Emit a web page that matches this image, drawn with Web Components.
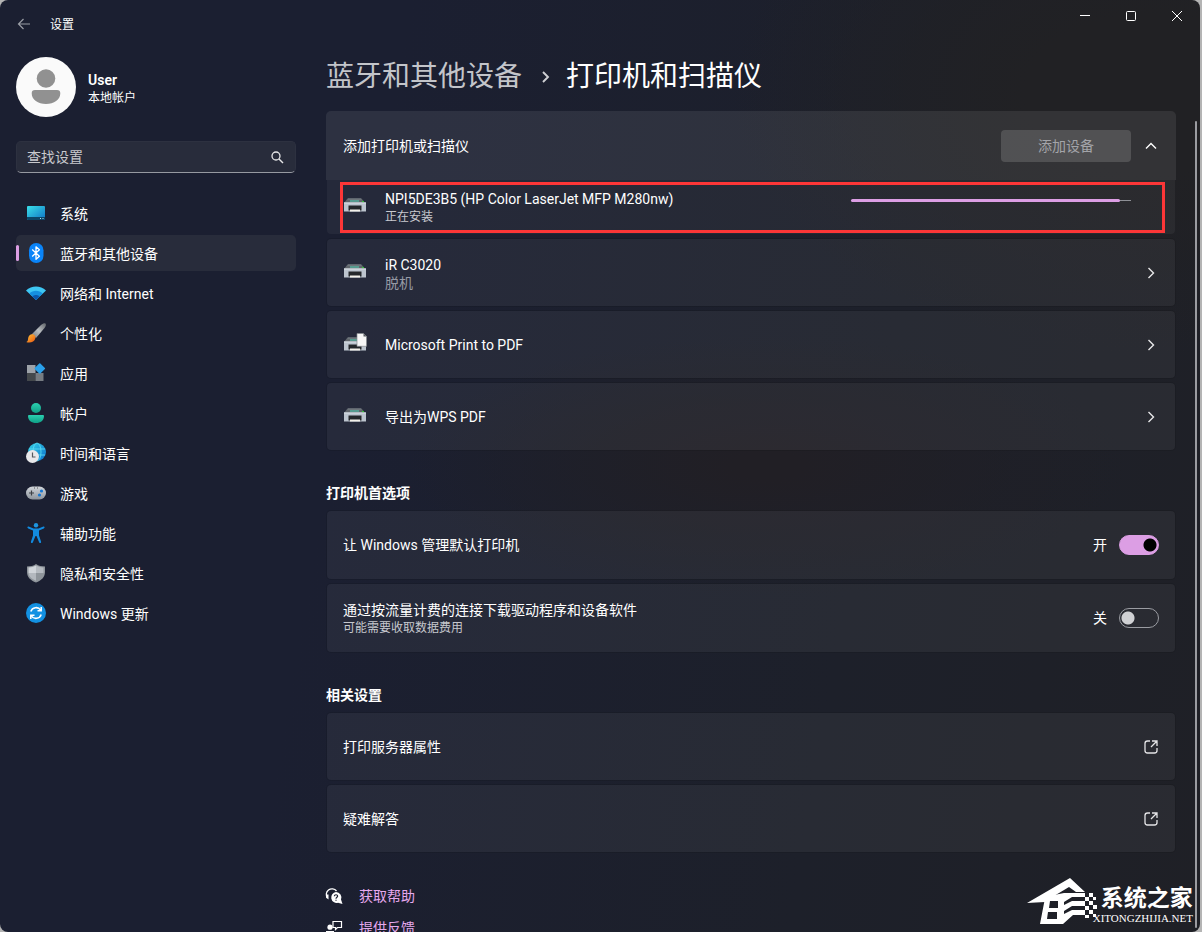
<!DOCTYPE html>
<html lang="zh-CN">
<head>
<meta charset="utf-8">
<title>设置</title>
<style>
  html, body { height: 100%; margin: 0; }
  body {
    background: #b4b4b4;
    color: #fff;
    font: 14px/20px Roboto, "Noto Sans CJK SC", sans-serif;
    overflow: hidden;
  }
</style>
</head>
<body>
<settings-window>
  <title-bar slot="title">设置</title-bar>

  <user-profile slot="side" name="User">本地帐户</user-profile>
  <search-box slot="side" placeholder="查找设置"></search-box>
  <nav-list slot="side">
    <nav-item icon="system">系统</nav-item>
    <nav-item icon="bluetooth" selected>蓝牙和其他设备</nav-item>
    <nav-item icon="wifi">网络和 Internet</nav-item>
    <nav-item icon="brush">个性化</nav-item>
    <nav-item icon="apps">应用</nav-item>
    <nav-item icon="account">帐户</nav-item>
    <nav-item icon="time">时间和语言</nav-item>
    <nav-item icon="game">游戏</nav-item>
    <nav-item icon="access">辅助功能</nav-item>
    <nav-item icon="shield">隐私和安全性</nav-item>
    <nav-item icon="update">Windows 更新</nav-item>
  </nav-list>

  <page-title parent="蓝牙和其他设备">打印机和扫描仪</page-title>
  <card-group>
    <add-device action="添加设备">
      添加打印机或扫描仪
      <install-row slot="detail" name="NPI5DE3B5 (HP Color LaserJet MFP M280nw)" value="96">正在安装</install-row>
    </add-device>
    <setting-card icon="printer" end="chevron" note="脱机" dim>iR C3020</setting-card>
    <setting-card icon="printerdoc" end="chevron">Microsoft Print to PDF</setting-card>
    <setting-card icon="printer" end="chevron">导出为WPS PDF</setting-card>
  </card-group>
  <card-group heading="打印机首选项">
    <setting-card tall>让 Windows 管理默认打印机<toggle-switch slot="end" on label="让 Windows 管理默认打印机"></toggle-switch></setting-card>
    <setting-card tall note="可能需要收取数据费用">通过按流量计费的连接下载驱动程序和设备软件<toggle-switch slot="end" label="通过按流量计费的连接下载驱动程序和设备软件"></toggle-switch></setting-card>
  </card-group>
  <card-group heading="相关设置">
    <setting-card end="external">打印服务器属性</setting-card>
    <setting-card end="external">疑难解答</setting-card>
  </card-group>
  <help-links>
    <help-link icon="help">获取帮助</help-link>
    <help-link icon="feedback">提供反馈</help-link>
  </help-links>

  <site-mark slot="mark" site="XITONGZHIJIA.NET">系统之家</site-mark>
</settings-window>

<script>
const PRINTER = `
  <path d="M4.500 3.500h14l3.500 4.500H1z" fill="#5f656b"/><path d="M5 3.500h13l.5 1H4.500z" fill="#7d8389"/>
  <path d="M7 5.500h9v1H7z" fill="#4fd3b5"/><path d="M1 7.500h22v9H1z" fill="#bcc4ce"/>
  <path d="M1 7.500h22v1H1z" fill="#dbe0e6"/><circle cx="20" cy="6.500" r=".8" fill="#2fe02f"/>
  <path d="M5.500 10.500h13v5h-13z" fill="#24272a"/><path d="M7 14.500h10v2H7z" fill="#f3f1ea"/>`;
const ICONS = {
  back: [16, `<path d="M14 8H2.500M7.500 3 2.500 8l5 5" fill="none" stroke="#9a9da5" stroke-width="1.200"/>`],
  min: [12, `<path d="M1 5.500h10" stroke="#fff"/>`],
  max: [12, `<rect x="1.500" y="1.500" width="9" height="9" rx="1" fill="none" stroke="#fff"/>`],
  close: [12, `<path d="M1 1l10 10M11 1 1 11" stroke="#fff" fill="none"/>`],
  search: [16, `<circle cx="7" cy="7" r="4" fill="none" stroke="#e6e6e8" stroke-width="1.300"/><path d="M10 10l4 4" stroke="#e6e6e8" stroke-width="1.500"/>`],
  user: [60, `<circle cx="30" cy="30" r="30" fill="#fafafa"/><circle cx="30" cy="21.500" r="9.300" fill="#919191"/><path d="M19 33h22a3.300 3.300 0 0 1 3.300 3.300C44.300 43 38 47 30 47s-14.300-4-14.300-10.700A3.300 3.300 0 0 1 19 33z" fill="#919191"/>`],
  system: [20, `<defs><linearGradient id="g" x2="1" y2="1"><stop stop-color="#3ae0ea"/><stop offset="1" stop-color="#0f72c4"/></linearGradient></defs><rect x="1" y="3" width="18" height="14" rx="1" fill="url(#g)"/><path d="M1 14h18v2a1 1 0 0 1-1 1H2a1 1 0 0 1-1-1z" fill="#0c4668"/><path d="M14 15h1v1h-1zM16.500 15h1v1h-1z" fill="#a9dff0"/>`],
  bluetooth: [20, `<rect x="3" y="0" width="14.500" height="20" rx="7.200" fill="#0a84f8"/><path d="M6.200 6.600l7.200 6.600-3.400 3V3.800l3.400 3-7.200 6.600" fill="none" stroke="#fff" stroke-width="1.300" stroke-linejoin="round"/>`],
  wifi: [20, `<path d="M0 7.500C5.500 2 14.500 2 20 7.500L10 17z" fill="#3ec7f4"/><path d="M3.300 10.600c3.700-3.700 9.700-3.700 13.400 0L10 17z" fill="#1590e0"/><path d="M6.300 13.500c2-2 5.400-2 7.400 0L10 17z" fill="#0b58ad"/>`],
  brush: [20, `<defs><linearGradient id="g" x1="1" x2="0" y2="1"><stop stop-color="#5e6267"/><stop offset=".5" stop-color="#b9bdc1"/><stop offset="1" stop-color="#73777c"/></linearGradient><linearGradient id="h" x2="1" y2="1"><stop stop-color="#ffc43a"/><stop offset="1" stop-color="#ea5410"/></linearGradient></defs><path d="M19.500.5c1 1 .2 2.800-1 4.500L10 15l-4.500-3.500L15 2C17 .4 18.700-.2 19.500.5z" fill="url(#g)"/><path d="M5 11.500c2.800-.8 5 1.400 4.300 4C8.400 19 4 20.600.200 19c2.300-.8 1.500-2.600 2.200-4.800.5-1.500 1.300-2.400 2.600-2.700z" fill="url(#h)"/>`],
  apps: [20, `<path d="M1 2h8.500v8H1z" fill="#9da2a9"/><path d="M1 10h8.500v8H1z" fill="#44484c"/><path d="M9.500 10h8v8h-8z" fill="#777c82"/><rect x="9.800" y="1.500" width="8" height="8" rx=".8" transform="rotate(45 13.800 5.500)" fill="#2aa0ea"/>`],
  account: [20, `<defs><linearGradient id="g" x2="0" y2="1"><stop stop-color="#2bd0b0"/><stop offset="1" stop-color="#0f9f86"/></linearGradient></defs><circle cx="10" cy="5" r="5" fill="url(#g)"/><path d="M3 12h14a1 1 0 0 1 1 1c0 4.500-3.500 7-8 7s-8-2.500-8-7a1 1 0 0 1 1-1z" fill="url(#g)"/>`],
  time: [20, `<defs><linearGradient id="g" x2="1" y2="1"><stop stop-color="#35d2e6"/><stop offset="1" stop-color="#0b6fcb"/></linearGradient></defs><circle cx="11" cy="9" r="9" fill="url(#g)"/><g fill="none" stroke="#5fe0f2" stroke-width=".8"><ellipse cx="11" cy="9" rx="4" ry="9"/><path d="M3 6h16M3 12h16"/></g><circle cx="6.500" cy="13.500" r="6.500" fill="#e8e8ea"/><path d="M6.500 9.500V14H9.500" fill="none" stroke="#55595e" stroke-width="1.200"/>`],
  game: [20, `<defs><linearGradient id="g" x2="0" y2="1"><stop stop-color="#d2d6db"/><stop offset="1" stop-color="#8d949c"/></linearGradient></defs><rect x="0" y="3.500" width="20" height="13" rx="6.500" fill="url(#g)"/><path d="M3 10h5M5.500 7.500v5" stroke="#3c4045" stroke-width="1.200"/><circle cx="15.500" cy="8" r="1.600" fill="#1677d2"/><circle cx="13.500" cy="12" r="1.600" fill="#1677d2"/><path d="M8 4.500h1v1H8zM11 4.500h1v1h-1z" fill="#555"/>`],
  access: [20, `<circle cx="10" cy="2.200" r="2.200" fill="#1d95e0"/><path d="M2.600 3.600 7.500 5.400h5l4.900-1.800c1.400-.2 1.700 1.200.4 1.800L13 7.600v4.900l2.100 6.300c.2 1.400-1.400 1.700-2 .4L10.500 13h-1l-2.600 6.200c-.6 1.300-2.200 1-2-.4L7 12.500V7.600L2.200 5.400c-1.300-.6-1-2 .4-1.800z" fill="#128be0"/>`],
  shield: [20, `<path d="M10 1c2.500 1.800 5.500 2.500 9 2.500V9c0 5-3.500 8.500-9 10.500C4.500 17.500 1 14 1 9V3.500C4.500 3.500 7.500 2.800 10 1z" fill="#8f959b"/><path d="M10 2.600c2.300 1.300 4.700 1.900 7.500 2V10H10z" fill="#b5bac0"/><path d="M10 2.600C7.700 3.900 5.300 4.500 2.500 4.600V10H10z" fill="#d0d4d9"/><path d="M2.500 10H10v7.800C5.500 16 2.800 13.500 2.500 10z" fill="#b3b8be"/>`],
  update: [20, `<circle cx="10" cy="10" r="10" fill="#1391e2"/><g fill="none" stroke="#fff" stroke-width="1.500"><path d="M4.800 8.500A5.500 5.500 0 0 1 14.700 7.200M15.200 11.500A5.500 5.500 0 0 1 5.300 12.800"/><path d="M15.200 4v3.700h-3.700M4.800 16v-3.700h3.700"/></g>`],
  printer: [24, PRINTER],
  printerdoc: [24, `<g transform="translate(0 1)">${PRINTER}</g><path d="M14 .5h6.500l3 3v9.800H14z" fill="#f7f7f7" stroke="#85898e" stroke-width=".7"/><path d="M20.500.5v3h3z" fill="#55595e"/>`],
  chevron: [16, `<path d="M5.500 3l5 5-5 5" fill="none" stroke="#e8e8ea" stroke-width="1.400"/>`],
  up: [16, `<path d="M3 10.500l5-5 5 5" fill="none" stroke="#fff" stroke-width="1.400"/>`],
  crumb: [16, `<path d="M7 3l5 5-5 5" fill="none" stroke="#cfd0d4" stroke-width="1.900"/>`],
  external: [16, `<path d="M7 2H4.500A2.500 2.500 0 0 0 2 4.500v7A2.500 2.500 0 0 0 4.500 14h7a2.500 2.500 0 0 0 2.500-2.500V9M9 2h5v5M14 2 8 8" fill="none" stroke="#e4e4e6" stroke-width="1.300"/>`],
  help: [16, `<path d="M1.500 10A5.500 5.500 0 1 1 10.500 3" fill="none" stroke="#fff" stroke-width="1.300"/><path d="M0 6.500h2.500v5L0 9.500z" fill="#fff"/><path d="M10 4a5.500 5.500 0 0 1 5 7.600L16.500 16 12 14.800A5.500 5.500 0 1 1 10 4z" fill="#fff"/><path d="M8.300 8.200c.2-2 3.400-1.900 3.300 0-.1 1.100-1.600 1.100-1.600 2.500M10 11.700v1.100" fill="none" stroke="#1d2030" stroke-width="1.200"/>`],
  feedback: [16, `<path d="M7 1.500h8.500v6h-4l-2 2v-2H7z" fill="none" stroke="#fff" stroke-width="1.200"/><circle cx="4" cy="7.200" r="2.600" fill="#fff"/><path d="M0 11h8v2c0 2-1.800 3-4 3s-4-1-4-3z" fill="#fff"/>`],
};
const icon = name => {
  const [size, art] = ICONS[name];
  return `<svg width="${size}" height="${size}" viewBox="0 0 ${size} ${size}" aria-hidden="true">${art}</svg>`;
};
const BASE = `:host,*{box-sizing:border-box}svg{display:block;flex:none;overflow:visible}button,input{font:inherit;color:inherit}button{border:0;background:none;padding:0;margin:0}a{color:inherit;text-decoration:none}`;

function define(tag, render) {
  customElements.define(tag, class extends HTMLElement {
    constructor() {
      super();
      this.attachShadow({ mode: "open" });
    }
    connectedCallback() {
      const t = document.createElement("template");
      const [css, html] = render(name => this.getAttribute(name), name => this.hasAttribute(name));
      t.innerHTML = `<style>${BASE}${css}</style>${html}`;
      this.shadowRoot.replaceChildren(t.content.cloneNode(true));
    }
  });
}

define("settings-window", () => [`
  :host{display:grid;position:relative;grid-template:48px minmax(0,1fr)/310px minmax(0,1fr);height:100vh;margin-right:2px;border-radius:8px;overflow:hidden;
    background:radial-gradient(ellipse 420px 260px at 96% 10%,#212124 30%,#21212400),radial-gradient(ellipse 360px 130px at 64% 50%,#211f25 10%,#211f2500),linear-gradient(100deg,#1b1f31 30%,#1d202a 70%,#1f2026)}
  ::slotted([slot=title]){grid-column:1/-1}
  aside{padding:9px 14px 0 16px;min-width:0}
  .pane{display:flex;min-width:0;min-height:0}
  main{flex:1;min-width:0;padding:9px 19px 0 16px;overflow:hidden}
  .bar{flex:none;width:2px;margin:73px 3px 4px 0;border-radius:1px;background:#9b9ca1}
  ::slotted([slot=mark]){position:absolute;right:7px;bottom:8px}`,
  `<slot name="title"></slot><aside><slot name="side"></slot></aside><div class="pane"><main><slot></slot></main><div class="bar"></div></div><slot name="mark"></slot>`]);

define("title-bar", () => [`
  :host{display:flex;font-size:12px}
  .back{width:48px;height:48px;display:grid;place-items:center}
  .name{flex:1;padding:1px 0 0 2px;line-height:48px}
  .ctl{width:46px;height:32px;display:grid;place-items:center}`,
  `<button class="back" aria-label="返回">${icon("back")}</button><span class="name"><slot></slot></span>
   <button class="ctl" aria-label="最小化">${icon("min")}</button><button class="ctl" aria-label="最大化">${icon("max")}</button><button class="ctl" aria-label="关闭">${icon("close")}</button>`]);

define("user-profile", a => [`
  :host{display:flex;align-items:center;gap:12px;margin-bottom:24px}
  div{padding-top:2px}
  b{display:block;font-size:14px;line-height:20px;font-weight:600}
  small{display:block;font-size:12px;line-height:16px}`,
  `${icon("user")}<div><b>${a("name")}</b><small><slot></slot></small></div>`]);

define("search-box", a => [`
  :host{display:block;margin-bottom:22px}
  label{display:flex;align-items:center;height:32px;padding:0 10px;border:1px solid #2d3140;border-bottom-color:#9699a1;border-radius:5px;background:#282c3b}
  input{flex:1;min-width:0;border:0;padding:0;background:none;outline:0}
  input::placeholder{color:#c8c9cd;opacity:1}`,
  `<label><input type="text" aria-label="${a("placeholder")}" placeholder="${a("placeholder")}">${icon("search")}</label>`]);

define("nav-list", () => [`:host{display:block}nav{display:grid;gap:4px}`, `<nav><slot></slot></nav>`]);

define("nav-item", (a, has) => [`
  :host{display:block}
  a{display:flex;position:relative;align-items:center;gap:14px;height:36px;padding-left:10px;border-radius:5px}
  span{padding-top:2px}
  a[aria-current]{background:#282c3b}
  a[aria-current]::before{content:"";position:absolute;left:0;top:10px;width:3px;height:16px;border-radius:2px;background:#dc9ee4}`,
  `<a href="#${a("icon")}"${has("selected") ? ' aria-current="page"' : ""}>${icon(a("icon"))}<span><slot></slot></span></a>`]);

define("page-title", a => [`
  :host{display:block;margin-bottom:14px}
  h1{display:flex;align-items:center;gap:14px;margin:0;font-size:28px;line-height:40px;font-weight:400;white-space:nowrap}
  a{color:#c3c5ca}`,
  `<h1><a href="#devices">${a("parent")}</a>${icon("crumb")}<span><slot></slot></span></h1>`]);

define("card-group", (a, has) => [`
  :host{display:block}
  h2{margin:0;padding-top:33px;font-size:14px;line-height:20px;font-weight:700;margin-bottom:8px}
  .cards{display:grid;gap:5px}`,
  `${has("heading") ? `<h2>${a("heading")}</h2>` : ""}<div class="cards"><slot></slot></div>`]);

define("add-device", a => [`
  :host{display:block}
  header{display:flex;align-items:center;gap:12px;height:69px;padding:0 17px;border-radius:5px 5px 0 0;background:#ffffff15}
  .name{flex:1}
  .add{width:130px;height:32px;border-radius:4px;background:#ffffff26;color:#a3a4a9}`,
  `<header><span class="name"><slot></slot></span><button class="add" disabled>${a("action")}</button><button aria-label="收起">${icon("up")}</button></header><slot name="detail"></slot>`]);

define("install-row", a => [`
  :host{display:flex;position:relative;gap:18px;height:54px;margin:0 1px;padding:9px 44px 0 16px;border-radius:0 0 4px 4px;background:#ffffff0c}
  svg{margin-top:6px}
  .text{flex:1;min-width:0}
  b{display:block;font-weight:400;line-height:20px}
  small{display:block;font-size:12px;line-height:16px;color:#c9cad0}
  progress{appearance:none;-webkit-appearance:none;flex:none;width:280px;height:3px;margin-top:10px;border:0;background:none}
  ::-webkit-progress-bar{background:linear-gradient(#8e9096,#8e9096) center/100% 1px no-repeat}
  ::-webkit-progress-value{background:#dc9ee4;border-radius:2px}
  .mark{position:absolute;inset:2px 10px 1px 13px;border:3px solid #fc3637}`,
  `${icon("printer")}<div class="text"><b>${a("name")}</b><small><slot></slot></small></div><progress max="100" value="${a("value")}" aria-label="${a("name")}"></progress><div class="mark"></div>`]);

define("setting-card", (a, has) => [`
  :host{display:flex;align-items:center;gap:18px;height:${has("tall") ? 68 : 67}px;margin:0 1px;padding:0 16px;border-radius:4px;background:#ffffff0d;box-shadow:0 0 0 1px #00000018}
  .text{flex:1;min-width:0}
  .name{display:block}
  small{display:block;font-size:${has("dim") ? 14 : 12}px;line-height:16px;color:${has("dim") ? "#969aa5" : "#c6c8ce"}}`,
  `${has("icon") ? icon(a("icon")) : ""}<div class="text"><span class="name"><slot></slot></span>${has("note") ? `<small>${a("note")}</small>` : ""}</div>${has("end") ? `<button aria-label="打开">${icon(a("end"))}</button>` : '<slot name="end"></slot>'}`]);

define("toggle-switch", (a, has) => [`
  :host{display:block}
  label{display:flex;align-items:center;gap:12px}
  input{appearance:none;width:40px;height:20px;margin:0;border:1px solid #9a9ca2;border-radius:10px;background:radial-gradient(circle at 8px 9px,#d0d1d4 6px,#0000 7px)}
  input:checked{border-color:#dc9ee4;background:radial-gradient(circle at 30px 9px,#000 6px,#dc9ee4 7px)}`,
  `<label><span>${has("on") ? "开" : "关"}</span><input type="checkbox" role="switch" aria-label="${a("label")}"${has("on") ? " checked" : ""}></label>`]);

define("help-links", () => [`:host{display:block;padding-top:28px}`, `<slot></slot>`]);
define("help-link", a => [`
  :host{display:block;color:#e6a9ee}
  a{display:flex;align-items:center;gap:17px;height:32px}`,
  `<a href="#${a("icon")}">${icon(a("icon"))}<span><slot></slot></span></a>`]);

define("site-mark", a => [`
  :host{display:flex;align-items:flex-end;color:#fff}
  .words{display:block;margin-left:-6px}
  b{display:block;padding-left:8px;font-size:23px;line-height:26px;font-weight:700}
  small{display:block;font:11px/12px "Liberation Serif",serif}`,
  `<svg width="72" height="46" viewBox="0 0 72 46" aria-hidden="true"><g fill="#fff">
     <path d="M0 25 43 0 58 14H49L42 9 22 21 18 24z"/>
     <path fill-rule="evenodd" d="M18 20 27 17 37 15 58 15V19H45L37 24V27L45 23H58V28H45L37 33V36L45 32H58V37H46L36 46H13zM23 23 22 30H31V23zM21 34 20 41H30V34z"/>
     <path d="M58 19h4v4h-4zM62 15h4v4h-4zM62 23h4v4h-4zM66 19h3v3h-3zM66 27h4v4h-4zM58 28h4v4h-4zM62 32h4v4h-4zM66 36h3v3h-3zM58 37h4v3h-4z"/></g></svg>
   <span class="words"><b><slot></slot></b><small>${a("site")}</small></span>`]);
</script>
</body>
</html>
